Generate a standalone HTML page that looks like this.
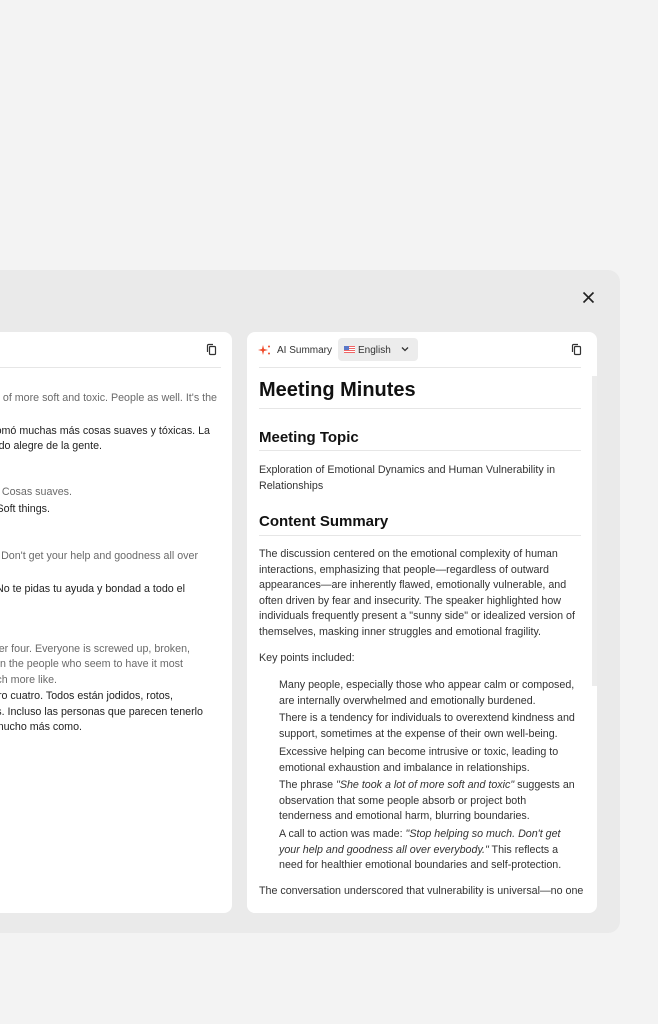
<!DOCTYPE html>
<html><head><meta charset="utf-8"><style>
*{margin:0;padding:0;box-sizing:border-box}
body{width:658px;height:1024px;background:#f3f3f3;position:relative;overflow:hidden;font-family:"Liberation Sans",sans-serif;color:#222}
.modal{position:absolute;left:-20px;top:270px;width:640px;height:663px;background:#eaeaea;border-radius:12px}
.card{position:absolute;background:#fff;border-radius:8px}
.l{position:absolute;white-space:nowrap;font-size:10.7px;line-height:14px}
.g{color:#6a6a6a}
.hr{position:absolute;height:1px;background:#e6e6e6}
.t{position:absolute;left:259px;font-size:10.7px;line-height:15.5px;color:#333;white-space:nowrap}
h1,h2{position:absolute;left:259px;font-weight:bold;color:#111;white-space:nowrap}
h1{font-size:20px}h2{font-size:15px}
i{font-style:italic}
</style></head><body>
<div class="modal"></div>
<svg style="position:absolute;left:582px;top:291px" width="13" height="13" viewBox="0 0 13 13"><path d="M1.5 1.5L11.5 11.5M11.5 1.5L1.5 11.5" stroke="#222" stroke-width="1.6"/></svg>
<div class="card" style="left:-10px;top:332px;width:242px;height:581px"></div>
<div class="card" style="left:247px;top:332px;width:350px;height:581px"></div>
<div class="hr" style="left:0;top:367px;width:221px"></div>
<svg style="position:absolute;left:206px;top:343px" width="12" height="13" viewBox="0 0 12 13"><rect x="3.5" y="3.5" width="6" height="8" rx="1" fill="none" stroke="#333" stroke-width="1.2"/><path d="M1.5 9V2.5a1 1 0 0 1 1-1H7" fill="none" stroke="#333" stroke-width="1.2"/></svg>
<div class="l g" style="right:441px;top:391px">of more soft and toxic. People as well. It's the</div>
<div class="l" style="right:448px;top:424px">omó muchas más cosas suaves y tóxicas. La</div>
<div class="l" style="right:556px;top:439px">do alegre de la gente.</div>
<div class="l g" style="right:586px;top:485px">. Cosas suaves.</div>
<div class="l" style="right:608px;top:502px">Soft things.</div>
<div class="l g" style="right:460px;top:549px">Don't get your help and goodness all over</div>
<div class="l" style="right:473px;top:582px">No te pidas tu ayuda y bondad a todo el</div>
<div class="l g" style="right:468px;top:642px">per four. Everyone is screwed up, broken,</div>
<div class="l g" style="right:475px;top:657px">en the people who seem to have it most</div>
<div class="l g" style="right:601px;top:673px">ch more like.</div>
<div class="l" style="right:485px;top:689px">ro cuatro. Todos están jodidos, rotos,</div>
<div class="l" style="right:455px;top:705px">s. Incluso las personas que parecen tenerlo</div>
<div class="l" style="right:576px;top:720px">mucho más como.</div>

<svg style="position:absolute;left:258px;top:344px" width="13" height="12" viewBox="0 0 13 12"><path d="M5 1L6 5L10 6L6 7L5 11L4 7L0 6L4 5Z" fill="#f04a2a"/><circle cx="11" cy="2.5" r="1" fill="#f04a2a"/><circle cx="11" cy="9.5" r="1" fill="#f04a2a"/></svg>
<div class="l" style="left:277px;top:344px;font-size:10px;color:#333">AI Summary</div>
<div style="position:absolute;left:338px;top:338px;width:80px;height:23px;background:#ececec;border-radius:4px"></div>
<div style="position:absolute;left:344px;top:346px;width:11px;height:7px;background:repeating-linear-gradient(#e66 0 1px,#fff 1px 2px);"></div>
<div style="position:absolute;left:344px;top:346px;width:5px;height:4px;background:#5a78c8"></div>
<div class="l" style="left:358px;top:344px;font-size:10px;color:#333">English</div>
<svg style="position:absolute;left:401px;top:346px" width="8" height="6" viewBox="0 0 8 6"><path d="M1 1.5L4 4.5L7 1.5" fill="none" stroke="#333" stroke-width="1.3"/></svg>
<svg style="position:absolute;left:571px;top:343px" width="12" height="13" viewBox="0 0 12 13"><rect x="3.5" y="3.5" width="6" height="8" rx="1" fill="none" stroke="#333" stroke-width="1.2"/><path d="M1.5 9V2.5a1 1 0 0 1 1-1H7" fill="none" stroke="#333" stroke-width="1.2"/></svg>
<div class="hr" style="left:259px;top:367px;width:322px"></div>
<div style="position:absolute;left:592px;top:376px;width:5px;height:310px;background:#ececec"></div>

<h1 style="top:379px">Meeting Minutes</h1>
<div class="hr" style="left:259px;top:408px;width:322px"></div>
<h2 style="top:429px">Meeting Topic</h2>
<div class="hr" style="left:259px;top:450px;width:322px"></div>
<div class="t" style="top:463px">Exploration of Emotional Dynamics and Human Vulnerability in<br>Relationships</div>
<h2 style="top:513px">Content Summary</h2>
<div class="hr" style="left:259px;top:535px;width:322px"></div>
<div class="t" style="top:547px">The discussion centered on the emotional complexity of human<br>interactions, emphasizing that people—regardless of outward<br>appearances—are inherently flawed, emotionally vulnerable, and<br>often driven by fear and insecurity. The speaker highlighted how<br>individuals frequently present a "sunny side" or idealized version of<br>themselves, masking inner struggles and emotional fragility.</div>
<div class="t" style="top:651px">Key points included:</div>
<div class="t" style="left:279px;top:678px">Many people, especially those who appear calm or composed,<br>are internally overwhelmed and emotionally burdened.</div>
<div class="t" style="left:279px;top:711px">There is a tendency for individuals to overextend kindness and<br>support, sometimes at the expense of their own well-being.</div>
<div class="t" style="left:279px;top:745px">Excessive helping can become intrusive or toxic, leading to<br>emotional exhaustion and imbalance in relationships.</div>
<div class="t" style="left:279px;top:778px">The phrase <i>"She took a lot of more soft and toxic"</i> suggests an<br>observation that some people absorb or project both<br>tenderness and emotional harm, blurring boundaries.</div>
<div class="t" style="left:279px;top:827px">A call to action was made: <i>"Stop helping so much. Don't get<br>your help and goodness all over everybody."</i> This reflects a<br>need for healthier emotional boundaries and self-protection.</div>
<div class="t" style="top:884px">The conversation underscored that vulnerability is universal—no one</div>
<div style="position:absolute;left:247px;top:902px;width:345px;height:11px;background:#fff;border-radius:0 0 8px 8px"></div>
</body></html>
